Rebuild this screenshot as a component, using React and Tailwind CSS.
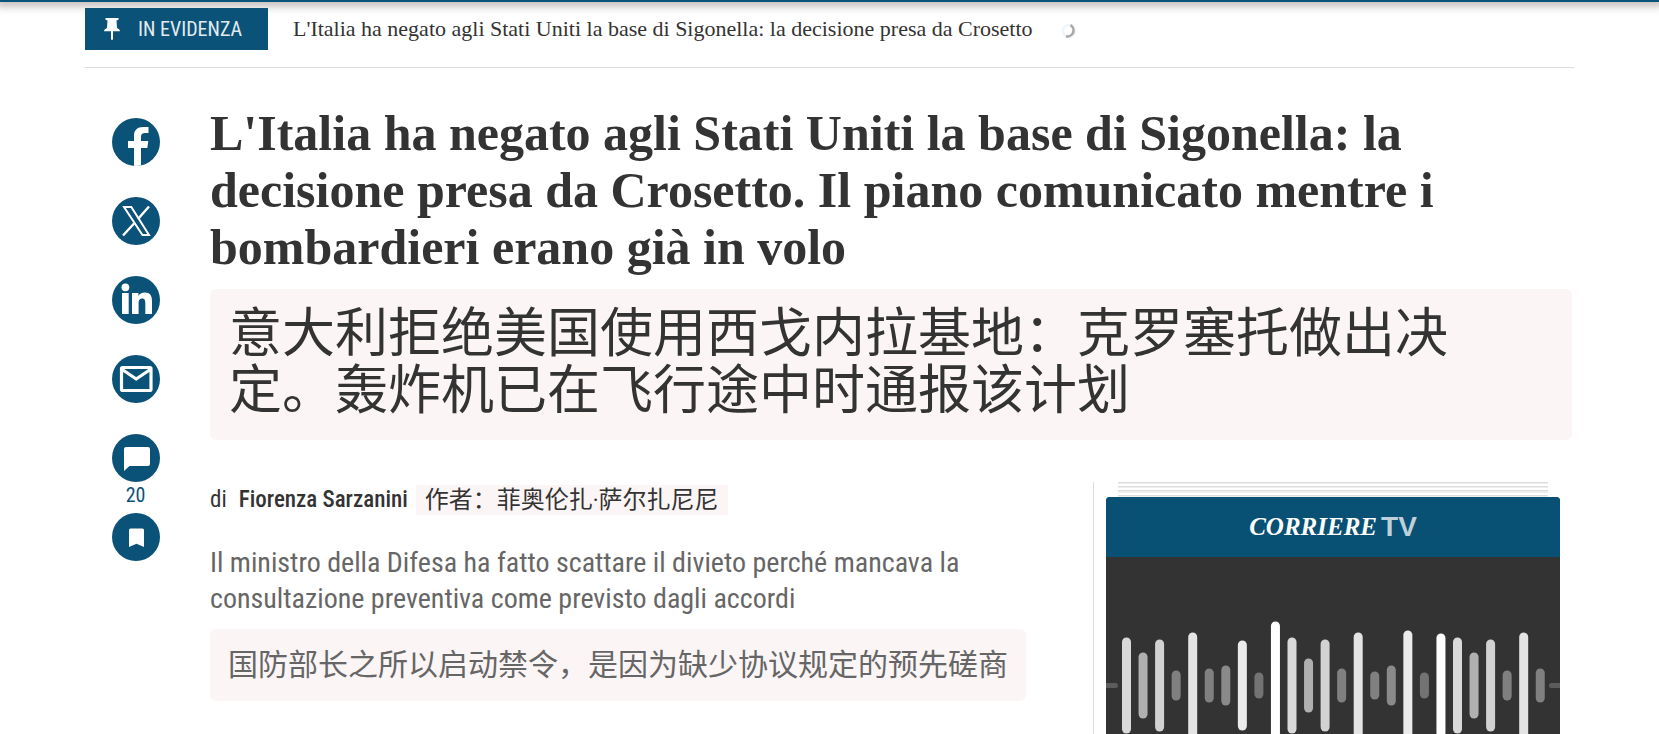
import React from 'react';

const bars = [
  [48, '#d9d9d9'], [33, '#b0b0b0'], [46, '#d2d2d2'], [15, '#808080'], [53, '#e4e4e4'],
  [17, '#808080'], [20, '#8a8a8a'], [45, '#ebebeb'], [13, '#737373'], [64, '#ffffff'],
  [48, '#d9d9d9'], [27, '#b0b0b0'], [46, '#d2d2d2'], [17, '#808080'], [53, '#e4e4e4'],
  [14, '#808080'], [20, '#8a8a8a'], [55, '#ebebeb'], [13, '#737373'], [52, '#ffffff'],
  [48, '#d9d9d9'], [33, '#b0b0b0'], [46, '#d2d2d2'], [15, '#808080'], [53, '#e4e4e4'],
  [17, '#808080'],
];

function Pin() {
  return (
    <svg viewBox="0 0 16 22" className="h-[22px] w-4" fill="#fff" aria-hidden="true">
      <path d="M1.500 0h13v1.800l-2 .7.5 7.500c1.800.8 2.800 1.700 3 3.200H9V21l-.6 1h-.8L7 21v-7.800H0c.2-1.500 1.200-2.400 3-3.200l.5-7.500-2-.7z" />
    </svg>
  );
}

function Facebook() {
  return (
    <svg viewBox="0 0 48 48" className="size-full" fill="#fff" aria-hidden="true">
      <path d="M22 48V30h-6v-7h6v-5.500C22 12 25.500 9 31 9h5.500v6H33c-2.800 0-4 1.300-4 3.600V23h7.300l-1 7H29v18z" />
    </svg>
  );
}

function XLogo() {
  return (
    <svg viewBox="0 0 48 48" className="size-full" fill="none" stroke="#fff" strokeWidth="2" aria-hidden="true">
      <path d="M12 10h7.300L37 38h-6.500z" />
      <path d="M37 9.500 26 22M22.500 26 11 38.500" strokeWidth="2.400" />
    </svg>
  );
}

function LinkedIn() {
  return (
    <svg viewBox="0 0 48 48" className="size-full" fill="#fff" aria-hidden="true">
      <circle cx="13.400" cy="11.300" r="3.900" />
      <path d="M10 17h6.700v21H10zM20 17h6.400v2.900c1-1.900 3.300-3.400 6.500-3.400 6 0 7.100 4 7.100 9V38h-6.700V27.300c0-2.700-.3-4.900-3.100-4.900s-3.600 2.200-3.600 4.800V38H20z" />
    </svg>
  );
}

function Mail() {
  return (
    <svg viewBox="0 0 48 48" className="size-full" fill="none" stroke="#fff" strokeWidth="3.200" strokeLinejoin="round" aria-hidden="true">
      <rect x="9.500" y="12.500" width="29.500" height="23" rx="1.200" />
      <path d="M9.500 14 24.200 24 39 14" />
    </svg>
  );
}

function Comment() {
  return (
    <svg viewBox="0 0 48 48" className="size-full" fill="#fff" aria-hidden="true">
      <path d="M14 13h22a2 2 0 0 1 2 2v15a2 2 0 0 1-2 2H17.500L12 37V15a2 2 0 0 1 2-2z" />
    </svg>
  );
}

function Bookmark() {
  return (
    <svg viewBox="0 0 48 48" className="size-full" fill="#fff" aria-hidden="true">
      <path d="M18.500 15.500h12a1.500 1.500 0 0 1 1.500 1.500v17l-7.500-3.200L17 34V17a1.500 1.500 0 0 1 1.500-1.500z" />
    </svg>
  );
}

function Share({ label, href, children }) {
  return (
    <a href={href} aria-label={label} className="flex size-12 items-center justify-center overflow-hidden rounded-full bg-[#0b5278] text-white">
      {children}
    </a>
  );
}

function Wave() {
  return (
    <svg viewBox="0 0 454 177" preserveAspectRatio="xMidYMin slice" className="h-full w-full" aria-hidden="true">
      <rect x="-4" y="126" width="16" height="5" rx="2.500" fill="#5c5c5c" />
      {bars.map(([half, color], i) => (
        <rect key={i} x={16 + i * 16.55} y={128.5 - half} width="9" height={half * 2} rx="4.500" fill={color} />
      ))}
      <rect x="443" y="126" width="16" height="5" rx="2.500" fill="#5c5c5c" />
    </svg>
  );
}

export default function App() {
  return (
    <div className="flex h-screen min-w-[1100px] flex-col overflow-hidden bg-white font-['Roboto_Condensed','Noto_Sans_CJK_SC',sans-serif] text-[#333]">
      <div className="h-[2px] shrink-0 bg-[#0b5278] shadow-[0_0_8px_4px_rgba(60,50,40,0.35)]" />
      <div className="flex min-h-0 flex-1 flex-col px-[85px] pt-[6px]">
        <div className="flex h-[60px] shrink-0 items-start border-b border-[#ddd]">
          <div className="relative flex h-[42px] w-[183px] items-center gap-[18px] bg-[#0b5278] pl-[19px] text-xl text-[#e3ebf0]">
            <Pin />
            <span>IN EVIDENZA</span>
          </div>
          <a href="#articolo" className="ml-[25px] font-['Liberation_Serif',serif] text-[22px] leading-[42px]">
            L'Italia ha negato agli Stati Uniti la base di Sigonella: la decisione presa da Crosetto
          </a>
          <svg viewBox="0 0 16 16" className="mt-[15px] ml-7 size-4" fill="none" strokeWidth="2.500" aria-hidden="true">
            <circle cx="8" cy="8" r="6" stroke="#eef6fb" />
            <path d="M9.500 2.200A6 6 0 0 1 5 13.200" stroke="#a8a8a8" />
          </svg>
        </div>

        <div className="flex min-h-0 flex-1">
          <nav aria-label="Condividi" className="flex w-[125px] shrink-0 flex-col items-center pt-[50px] pr-6">
            <div className="flex flex-col items-center gap-[31px]">
              <Share label="Facebook" href="#facebook"><Facebook /></Share>
              <Share label="X" href="#x"><XLogo /></Share>
              <Share label="LinkedIn" href="#linkedin"><LinkedIn /></Share>
              <Share label="Email" href="#email"><Mail /></Share>
              <Share label="Commenti" href="#commenti"><Comment /></Share>
            </div>
            <span className="h-[31px] text-xl leading-[27px] text-[#0b5278]">20</span>
            <Share label="Salva" href="#salva"><Bookmark /></Share>
          </nav>

          <article id="articolo" className="flex min-w-0 flex-1 flex-col pt-[37px] pr-[2px]">
            <h1>
              <span className="block font-['Liberation_Serif',serif] text-[50px] leading-[57px] font-bold">
                L'Italia ha negato agli Stati Uniti la base di Sigonella: la decisione presa da Crosetto. Il piano comunicato mentre i bombardieri erano già in volo
              </span>
              <span lang="zh" className="mt-[13px] block rounded-md bg-[#fbf5f5] px-[19px] pt-3 pb-[25px] font-['Noto_Sans_CJK_SC',sans-serif] text-[53px] leading-[57px] font-normal">
                意大利拒绝美国使用西戈内拉基地：克罗塞托做出决定。轰炸机已在飞行途中时通报该计划
              </span>
            </h1>

            <div className="flex min-h-0 flex-1 pt-[42px]">
              <div className="w-[816px] shrink-0">
                <p className="flex items-center pt-[3px] text-[23px] leading-[30px]">
                  <span>di</span>
                  <a href="#autore" className="ml-3 font-medium">Fiorenza Sarzanini</a>
                  <span lang="zh" className="ml-2 bg-[#fbf5f5] px-[9px] text-2xl leading-[30px]">作者：菲奥伦扎·萨尔扎尼尼</span>
                </p>
                <h2 className="mt-[30px] text-[#666]">
                  <span className="block text-[28px] leading-9">
                    Il ministro della Difesa ha fatto scattare il divieto perché mancava la consultazione preventiva come previsto dagli accordi
                  </span>
                  <span lang="zh" className="mt-3 block rounded-md bg-[#fbf5f5] px-[18px] py-[18px] text-[30px] leading-9">
                    国防部长之所以启动禁令，是因为缺少协议规定的预先磋商
                  </span>
                </h2>
              </div>

              <aside className="ml-auto flex w-[479px] flex-col border-l border-[#ddd] pr-3 pl-3">
                <div className="mx-3 flex flex-col gap-[2px]">
                  <div className="h-[2px] border-t border-[#ddd] bg-[#eee]" />
                  <div className="h-[2px] border-t border-[#ddd] bg-[#eee]" />
                  <div className="h-[3px] border-t border-[#ddd] bg-[#eee]" />
                  <div className="h-[2px] border-t border-[#ddd] bg-[#eee]" />
                </div>
                <section className="flex min-h-0 flex-1 flex-col overflow-hidden rounded-t bg-[#333]">
                  <h3 className="flex h-[60px] shrink-0 items-center justify-center gap-1 bg-[#085074] font-bold text-white">
                    <span className="font-['Liberation_Serif',serif] text-[25px] italic">CORRIERE</span>
                    <span className="font-['Liberation_Sans',sans-serif] text-[28px] text-[#bdd0db]">TV</span>
                  </h3>
                  <div className="min-h-0 flex-1"><Wave /></div>
                </section>
              </aside>
            </div>
          </article>
        </div>
      </div>
    </div>
  );
}
